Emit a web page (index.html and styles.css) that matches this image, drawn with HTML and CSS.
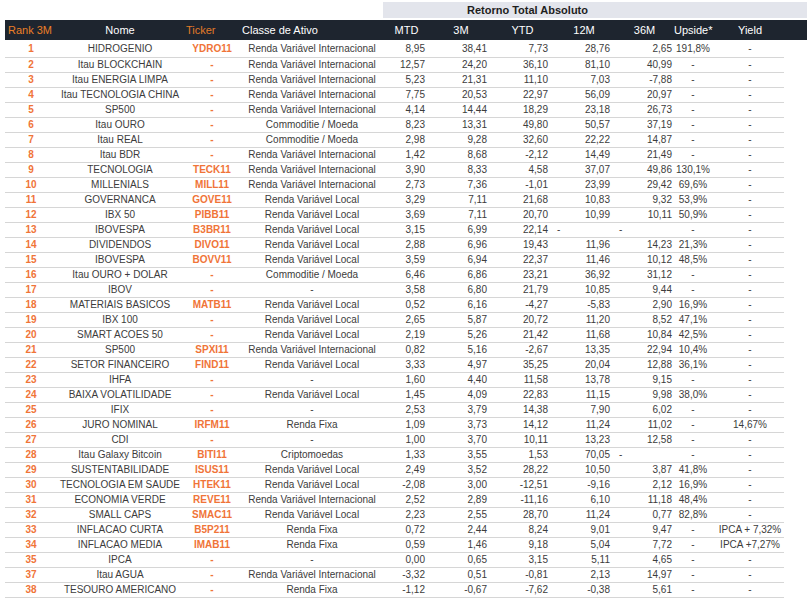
FILE: index.html
```html
<!DOCTYPE html>
<html lang="pt-BR">
<head>
<meta charset="utf-8">
<title>Retorno Total Absoluto</title>
<link rel="stylesheet" href="styles.css">
</head>
<body>
<div class="page">
  <div class="super">
    <div class="super-box">
      <div class="super-title">Retorno Total Absoluto</div>
    </div>
  </div>
  <table class="grid">
    <colgroup>
      <col class="c-rank"><col class="c-nome"><col class="c-ticker"><col class="c-classe">
      <col class="c-mtd"><col class="c-3m"><col class="c-ytd"><col class="c-12m"><col class="c-36m">
      <col class="c-up"><col class="c-yield"><col class="c-pad">
    </colgroup>
    <thead>
      <tr>
        <th class="h-rank">Rank 3M</th>
        <th class="h-nome">Nome</th>
        <th class="h-ticker">Ticker</th>
        <th class="h-classe">Classe de Ativo</th>
        <th>MTD</th><th>3M</th><th>YTD</th><th>12M</th><th>36M</th>
        <th>Upside*</th><th class="h-yield">Yield</th><th></th>
      </tr>
    </thead>
    <tbody id="rows">
    </tbody>
  </table>
</div>
<script src="app.js"></script>
</body>
</html>
```
FILE: app.js
```js
const RVI = "Renda Variável Internacional";
const RVL = "Renda Variável Local";
const CM = "Commoditie / Moeda";
const RF = "Renda Fixa";
const data = [
  ["1","HIDROGENIO","YDRO11",RVI,"8,95","38,41","7,73","28,76","2,65","191,8%","-"],
  ["2","Itau BLOCKCHAIN","-",RVI,"12,57","24,20","36,10","81,10","40,99","-","-"],
  ["3","Itau ENERGIA LIMPA","-",RVI,"5,23","21,31","11,10","7,03","-7,88","-","-"],
  ["4","Itau TECNOLOGIA CHINA","-",RVI,"7,75","20,53","22,97","56,09","20,97","-","-"],
  ["5","SP500","-",RVI,"4,14","14,44","18,29","23,18","26,73","-","-"],
  ["6","Itau OURO","-",CM,"8,23","13,31","49,80","50,57","37,19","-","-"],
  ["7","Itau REAL","-",CM,"2,98","9,28","32,60","22,22","14,87","-","-"],
  ["8","Itau BDR","-",RVI,"1,42","8,68","-2,12","14,49","21,49","-","-"],
  ["9","TECNOLOGIA","TECK11",RVI,"3,90","8,33","4,58","37,07","49,86","130,1%","-"],
  ["10","MILLENIALS","MILL11",RVI,"2,73","7,36","-1,01","23,99","29,42","69,6%","-"],
  ["11","GOVERNANCA","GOVE11",RVL,"3,29","7,11","21,68","10,83","9,32","53,9%","-"],
  ["12","IBX 50","PIBB11",RVL,"3,69","7,11","20,70","10,99","10,11","50,9%","-"],
  ["13","IBOVESPA","B3BR11",RVL,"3,15","6,99","22,14","*-","*-","-","-"],
  ["14","DIVIDENDOS","DIVO11",RVL,"2,88","6,96","19,43","11,96","14,23","21,3%","-"],
  ["15","IBOVESPA","BOVV11",RVL,"3,59","6,94","22,37","11,46","10,12","48,5%","-"],
  ["16","Itau OURO + DOLAR","-",CM,"6,46","6,86","23,21","36,92","31,12","-","-"],
  ["17","IBOV","-","-","3,58","6,80","21,79","10,85","9,44","-","-"],
  ["18","MATERIAIS BASICOS","MATB11",RVL,"0,52","6,16","-4,27","-5,83","2,90","16,9%","-"],
  ["19","IBX 100","-",RVL,"2,65","5,87","20,72","11,20","8,52","47,1%","-"],
  ["20","SMART ACOES 50","-",RVL,"2,19","5,26","21,42","11,68","10,84","42,5%","-"],
  ["21","SP500","SPXI11",RVI,"0,82","5,16","-2,67","13,35","22,94","10,4%","-"],
  ["22","SETOR FINANCEIRO","FIND11",RVL,"3,33","4,97","35,25","20,04","12,88","36,1%","-"],
  ["23","IHFA","-","-","1,60","4,40","11,58","13,78","9,15","-","-"],
  ["24","BAIXA VOLATILIDADE","-",RVL,"1,45","4,09","22,83","11,15","9,98","38,0%","-"],
  ["25","IFIX","-","-","2,53","3,79","14,38","7,90","6,02","-","-"],
  ["26","JURO NOMINAL","IRFM11",RF,"1,09","3,73","14,12","11,24","11,02","-","14,67%"],
  ["27","CDI","-","-","1,00","3,70","10,11","13,23","12,58","-","-"],
  ["28","Itau Galaxy Bitcoin","BITI11","Criptomoedas","1,33","3,55","1,53","70,05","*-","-","-"],
  ["29","SUSTENTABILIDADE","ISUS11",RVL,"2,49","3,52","28,22","10,50","3,87","41,8%","-"],
  ["30","TECNOLOGIA EM SAUDE","HTEK11",RVL,"-2,08","3,00","-12,51","-9,16","2,12","16,9%","-"],
  ["31","ECONOMIA VERDE","REVE11",RVI,"2,52","2,89","-11,16","6,10","11,18","48,4%","-"],
  ["32","SMALL CAPS","SMAC11",RVL,"2,23","2,55","28,70","11,24","0,77","82,8%","-"],
  ["33","INFLACAO CURTA","B5P211",RF,"0,72","2,44","8,24","9,01","9,47","-","IPCA + 7,32%"],
  ["34","INFLACAO MEDIA","IMAB11",RF,"0,59","1,46","9,18","5,04","7,72","-","IPCA +7,27%"],
  ["35","IPCA","-","-","0,00","0,65","3,15","5,11","4,65","-","-"],
  ["37","Itau AGUA","-",RVI,"-3,32","0,51","-0,81","2,13","14,97","-","-"],
  ["38","TESOURO AMERICANO","-",RF,"-1,12","-0,67","-7,62","-0,38","5,61","-","-"]
];
const tbody = document.getElementById("rows");
data.forEach((r, i) => {
  const tr = document.createElement("tr");
  if (i === 0) tr.className = "first";
  const cells = [
    ["rank", r[0]], ["nome", r[1]], ["ticker", r[2]], ["classe", r[3]],
    ["num", r[4]], ["num", r[5]], ["num", r[6]], ["num", r[7]], ["num n36", r[8]],
    ["up", r[9]], ["yield", r[10]]
  ];
  cells.forEach(([cls, v]) => {
    const td = document.createElement("td");
    if (v.startsWith("*")) { td.className = "dash-left"; td.textContent = v.slice(1); }
    else { td.className = cls; td.textContent = v; }
    tr.appendChild(td);
  });
  const pad = document.createElement("td");
  pad.className = "pad";
  tr.appendChild(pad);
  tbody.appendChild(tr);
});
```
FILE: styles.css
```css
html, body {
  margin: 0;
  padding: 0;
  background: #ffffff;
}
body {
  font-family: "Liberation Sans", Arial, sans-serif;
  color: #3c3c3c;
}
.page {
  padding: 2px 0 0 5px;
}
.super {
  display: flex;
  padding-left: 378px;
  margin-bottom: 2px;
}
.super-box {
  flex: 1;
  height: 16px;
  background: #e3e5ec;
  display: flex;
}
.super-title {
  width: 289px;
  text-align: center;
  font-size: 11px;
  font-weight: bold;
  line-height: 16px;
  color: #1e1e1e;
}
.grid {
  border-collapse: collapse;
  table-layout: fixed;
  width: 802px;
  font-size: 10px;
}
.c-rank { width: 52px; }
.c-nome { width: 126px; }
.c-ticker { width: 58px; }
.c-classe { width: 142px; }
.c-mtd { width: 47px; }
.c-3m { width: 62px; }
.c-ytd { width: 61px; }
.c-12m { width: 62px; }
.c-36m { width: 59px; }
.c-up { width: 38px; }
.c-yield { width: 72px; }
.c-pad { width: 23px; }
thead th {
  background: #1e252f;
  color: #ffffff;
  font-weight: normal;
  font-size: 11px;
  height: 20px;
  padding: 0;
  text-align: center;
  white-space: nowrap;
  overflow: visible;
}
thead th.h-rank { text-align: left; padding-left: 3px; color: #ea7f27; }
thead th.h-ticker { text-align: left; padding-left: 3px; color: #e27a28; }
thead th.h-classe { text-align: left; padding-left: 1px; }
thead th.h-yield { padding-left: 4px; }
tbody td {
  height: 14px;
  padding: 0;
  border-bottom: 1px solid #d6d6d6;
  white-space: nowrap;
  line-height: 14px;
  text-align: center;
}
tbody tr.first td { height: 17px; }
tbody td.pad { border-bottom: none; }
td.rank {
  color: #f07438;
  font-weight: bold;
}
td.ticker {
  color: #f07438;
  font-weight: bold;
}
td.num {
  text-align: right;
  padding-right: 5px;
}
td.num.n36 { padding-right: 2px; }
td.dash-left {
  text-align: left;
  padding-left: 4px;
}
td.yield { padding-left: 4px; }
```
